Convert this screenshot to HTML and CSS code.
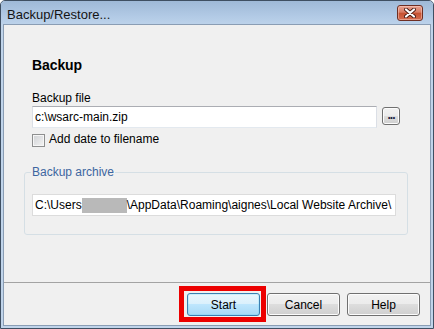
FILE: index.html
```html
<!DOCTYPE html>
<html>
<head>
<meta charset="utf-8">
<title>Backup/Restore...</title>
<link rel="stylesheet" href="styles.css">
</head>
<body>
<div class="window">
  <div class="titlebar">
    <span class="title">Backup/Restore...</span>
    <span class="close">
      <svg width="12" height="10" viewBox="0 0 12 10">
        <path d="M2 1.5 L10 8.5 M10 1.5 L2 8.5" stroke="#4a1a12" stroke-width="4" stroke-linecap="round" fill="none"/>
        <path d="M2 1.5 L10 8.5 M10 1.5 L2 8.5" stroke="#ffffff" stroke-width="2.2" stroke-linecap="round" fill="none"/>
      </svg>
    </span>
  </div>
  <div class="client">
    <div class="main">
      <div class="heading">Backup</div>
      <div class="label">Backup file</div>
      <div class="filerow">
        <div class="textbox">c:\wsarc-main.zip</div>
        <div class="browse">...</div>
      </div>
      <div class="check">
        <span class="box"></span>
        <span class="checktext">Add date to filename</span>
      </div>
      <fieldset class="group">
        <legend>Backup archive</legend>
        <div class="readonly">C:\Users<span class="blur"></span>\AppData\Roaming\aignes\Local Website Archive\</div>
      </fieldset>
    </div>
    <div class="footer">
      <button class="btn default">Start<span class="highlight"></span></button>
      <button class="btn">Cancel</button>
      <button class="btn">Help</button>
    </div>
  </div>
</div>
</body>
</html>
```

FILE: styles.css
```css
html, body {
  margin: 0;
  padding: 0;
  background: #ffffff;
}

body {
  font-family: "Liberation Sans", Arial, sans-serif;
  font-size: 12px;
  color: #000;
}

.window {
  width: 434px;
  height: 329px;
  box-sizing: border-box;
  border: 1px solid #3f4f62;
  border-radius: 5px 5px 0 0;
  padding: 0 2px 2px 2px;
  background: #c0d4ea;
  display: flex;
  flex-direction: column;
  overflow: hidden;
}

.titlebar {
  height: 23px;
  flex: none;
  display: flex;
  align-items: flex-start;
  justify-content: space-between;
  margin: 0 -2px;
  padding: 0 2px;
  background: linear-gradient(#9fb9d7, #b3cbe6 70%, #bcd2ea);
}

.title {
  font-size: 13px;
  line-height: 15px;
  margin: 6px 0 0 4px;
  color: #141414;
}

.close {
  width: 26px;
  height: 16px;
  box-sizing: border-box;
  margin: 4px 8px 0 0;
  border: 1px solid #6e2e22;
  border-radius: 3px;
  background: linear-gradient(#e9a290, #d87a62 45%, #c6502f 50%, #d46c4f);
  box-shadow: inset 0 0 0 1px rgba(255, 220, 210, 0.45);
  display: flex;
  align-items: center;
  justify-content: center;
}

.close svg {
  display: block;
}

.client {
  flex: 1;
  display: flex;
  flex-direction: column;
  background: #f0f0f0;
  border: 1px solid #8a9db4;
}

.main {
  flex: 1;
  padding: 32px 0 0 20px;
}

.heading {
  margin-left: 8px;
  font-size: 14px;
  font-weight: bold;
  line-height: 16px;
  letter-spacing: -0.1px;
}

.label {
  margin: 18px 0 0 8px;
  line-height: 14px;
}

.filerow {
  margin: 1px 0 0 8px;
  display: flex;
  align-items: flex-start;
  gap: 5px;
}

.textbox {
  width: 345px;
  height: 22px;
  box-sizing: border-box;
  border: 1px solid #abadb3;
  border-left-color: #dbdfe6;
  border-right-color: #dbdfe6;
  border-bottom-color: #e3e9ef;
  background: #fff;
  padding: 0 2px;
  line-height: 20px;
}

.browse {
  width: 18px;
  height: 18px;
  box-sizing: border-box;
  margin-top: 1px;
  border: 1px solid #707070;
  border-radius: 3px;
  background: linear-gradient(#f2f2f2, #ebebeb 50%, #dddddd 50%, #cfcfcf);
  box-shadow: inset 0 0 0 1px #fcfcfc;
  font-size: 12px;
  line-height: 14px;
  text-align: center;
  color: #202040;
  font-weight: bold;
  letter-spacing: -1px;
}

.check {
  margin: 5px 0 0 8px;
  display: flex;
  align-items: flex-start;
  gap: 4px;
}

.box {
  width: 13px;
  height: 13px;
  box-sizing: border-box;
  margin-top: 1px;
  border: 1px solid #8e8f8f;
  background: linear-gradient(135deg, #cfd1d4, #f4f4f4);
  box-shadow: inset 0 0 0 1px #f6f6f6;
}

.checktext {
  line-height: 12px;
  margin-top: 0;
}

.group {
  margin: 18px 0 0 0;
  width: 384px;
  box-sizing: border-box;
  min-width: 0;
  border: 1px solid #d5dfe5;
  border-radius: 3px;
  padding: 15px 11px 18px 7px;
}

.group legend {
  padding: 0 1px;
  margin-left: -1px;
  line-height: 14px;
  color: #3d66a0;
}

.readonly {
  width: 364px;
  height: 22px;
  box-sizing: border-box;
  border: 1px solid #dcdcdc;
  background: #fff;
  padding: 0 2px;
  line-height: 20px;
  white-space: nowrap;
  overflow: hidden;
}

.blur {
  display: inline-block;
  width: 45px;
  height: 15px;
  vertical-align: -4px;
  background: #b9b9b9;
}

.footer {
  flex: none;
  border-top: 1px solid #a3a3a3;
  padding: 10px 10px 9px 0;
  display: flex;
  justify-content: flex-end;
  gap: 7px;
}

.btn {
  position: relative;
  width: 73px;
  height: 23px;
  box-sizing: border-box;
  margin: 0;
  padding: 0;
  border: 1px solid #707070;
  border-radius: 3px;
  background: linear-gradient(#f2f2f2, #ebebeb 50%, #dddddd 50%, #cfcfcf);
  box-shadow: inset 0 0 0 1px #fcfcfc;
  font-family: "Liberation Sans", Arial, sans-serif;
  font-size: 12px;
  color: #000;
  line-height: 20px;
  text-align: center;
}

.btn.default {
  border-color: #3c7fb1;
  background: linear-gradient(#eaf6fd, #d9f0fc 50%, #bee6fd 50%, #a7d9f5);
  box-shadow: inset 0 0 0 1px #48d8fb33;
}

.highlight {
  position: absolute;
  left: -9px;
  top: -8px;
  right: -7px;
  bottom: -7px;
  border: 5px solid #ec0000;
}
```
